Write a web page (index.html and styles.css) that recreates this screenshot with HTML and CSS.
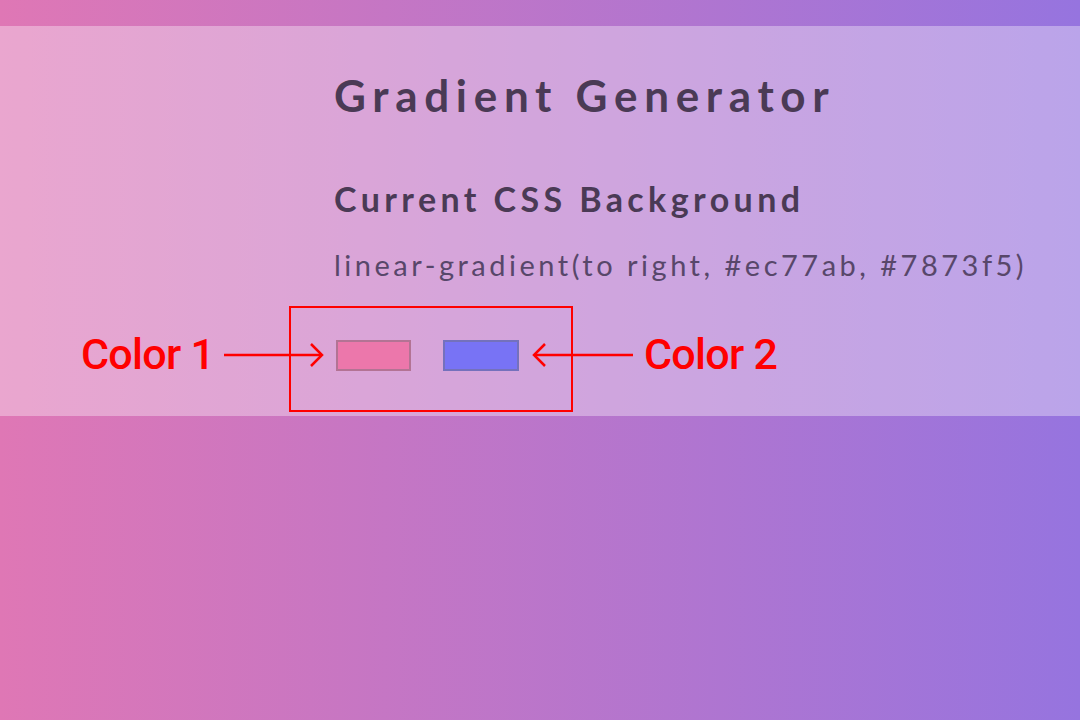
FILE: index.html
```html
<!DOCTYPE html>
<html lang="en">
<head>
<meta charset="utf-8">
<title>Gradient Generator</title>
<link rel="stylesheet" href="styles.css">
</head>
<body>
  <main class="page">
    <section class="panel">
      <h1 class="title">Gradient Generator</h1>
      <h2 class="subtitle">Current CSS Background</h2>
      <p class="code">linear-gradient(to right, #ec77ab, #7873f5)</p>
      <div class="swatches">
        <div class="swatch swatch-one"></div>
        <div class="swatch swatch-two"></div>
      </div>

      <div class="annot-box"></div>
      <span class="annot-label label-one">Color 1</span>
      <svg class="annot-arrow arrow-one" width="100" height="28" viewBox="0 0 100 28">
        <line x1="0" y1="14" x2="98" y2="14"/>
        <polyline points="87,3 98,14 87,25"/>
      </svg>
      <svg class="annot-arrow arrow-two" width="101" height="28" viewBox="0 0 101 28">
        <line x1="2" y1="14" x2="101" y2="14"/>
        <polyline points="13,3 2,14 13,25"/>
      </svg>
      <span class="annot-label label-two">Color 2</span>
    </section>
  </main>
</body>
</html>
```
FILE: styles.css
```css
* { box-sizing: border-box; }

html, body {
  margin: 0;
  padding: 0;
}

body {
  min-height: 720px;
  background: linear-gradient(to right, #df77b5, #9674df);
  font-family: "Lato", "Noto Sans", sans-serif;
  color: #4a3a55;
}

.page {
  padding-top: 26px;
}

.panel {
  position: relative;
  height: 390px;
  background: rgba(255, 255, 255, 0.35);
  padding: 43px 0 0 334px;
}

.title {
  margin: 0;
  font-size: 44px;
  line-height: 52px;
  font-weight: 700;
  letter-spacing: 6.7px;
}

.subtitle {
  margin: 58px 0 0;
  font-size: 34px;
  line-height: 40px;
  font-weight: 700;
  letter-spacing: 4.4px;
}

.code {
  margin: 28px 0 0;
  font-size: 29px;
  line-height: 36px;
  font-weight: 400;
  color: #58476a;
  letter-spacing: 3.5px;
}

.swatches {
  display: flex;
  gap: 32px;
  margin-top: 57px;
  padding-left: 2px;
}

.swatch {
  width: 76px;
  height: 31px;
  border: 2px solid rgba(110, 110, 120, 0.45);
}

.swatch-one { background: #ec77ab; width: 75px; }
.swatch-two { background: #7873f5; }

/* annotation overlay */
.annot-box {
  position: absolute;
  left: 289px;
  top: 280px;
  width: 284px;
  height: 106px;
  border: 2px solid #ff0000;
}

.annot-label {
  position: absolute;
  top: 306px;
  font-family: "Roboto", "Liberation Sans", sans-serif;
  font-weight: 500;
  font-size: 43px;
  line-height: 44px;
  letter-spacing: -0.7px;
  color: #ff0000;
}

.label-one { left: 81px; }
.label-two { left: 644px; }

.annot-arrow {
  position: absolute;
  top: 315px;
  fill: none;
  stroke: #ff0000;
  stroke-width: 2.5;
}

.arrow-one { left: 224px; }
.arrow-two { left: 532px; }
```
